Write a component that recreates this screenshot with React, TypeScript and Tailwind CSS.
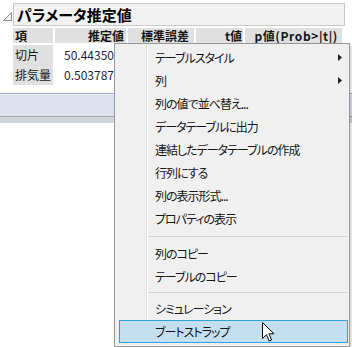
const menuItems = [
  { label: "テーブルスタイル", sub: true },
  { label: "列", sub: true },
  { label: "列の値で並べ替え..." },
  { label: "データテーブルに出力" },
  { label: "連結したデータテーブルの作成" },
  { label: "行列にする" },
  { label: "列の表示形式..." },
  { label: "プロパティの表示" },
];

function MenuItem({ label, sub }: { label: string; sub?: boolean }) {
  return (
    <div className="relative flex h-[23px] items-center pl-[40px]">
      <span>{label}</span>
      {sub && (
        <svg className="absolute right-[7px] top-[8px]" width="4" height="7" viewBox="0 0 4 7">
          <path d="M0 0 L4 3.5 L0 7 Z" fill="#222" />
        </svg>
      )}
    </div>
  );
}

function Separator({ top, bottom }: { top: string; bottom: string }) {
  return (
    <div className={`${top} ${bottom} ml-[34px] mr-[2px]`}>
      <div className="h-px bg-[#d5d5d5]" />
    </div>
  );
}

export default function App() {
  return (
    <div className="relative h-[347px] w-[352px] overflow-hidden bg-white font-['Noto_Sans_CJK_JP',sans-serif] text-[12px] text-[#151515] [font-feature-settings:'palt']">
      {/* title */}
      <div className="flex pr-[7px] pt-[3px]">
        <div className="w-[13px] pl-[3px] pt-[9px]">
          <svg width="9" height="9" viewBox="0 0 9 9">
            <path d="M8.5 0.5 L8.5 8.5 L0.5 8.5 Z" fill="#f4f4f4" stroke="#8a8a8a" />
          </svg>
        </div>
        <div className="h-[23px] flex-1 border border-[#c9c9c9] bg-[#f2f2f2] pl-[3px] text-[15px] font-bold leading-[21px] text-black">
          パラメータ推定値
        </div>
      </div>

      {/* table */}
      <div className="ml-[13px] mt-[2px] grid grid-cols-[40px_71px_66px_47px_97px] gap-x-[2px] leading-[15px]">
        <div className="h-[15px] bg-[#e0e0e0] pl-[2px] font-bold">項</div>
        <div className="h-[15px] bg-[#e0e0e0] pr-[2px] text-right font-bold">推定値</div>
        <div className="h-[15px] bg-[#e0e0e0] pl-[13px] font-bold">標準誤差</div>
        <div className="h-[15px] bg-[#e0e0e0] pr-[1px] text-right font-bold">t値</div>
        <div className="h-[15px] bg-[#e0e0e0] pr-[4px] text-right font-bold tracking-[0.6px]">p値(Prob&gt;|t|)</div>
      </div>
      <div className="ml-[13px] mt-[2px] grid grid-cols-[40px_71px] gap-x-[2px] leading-[20px]">
        <div className="bg-[#e0e0e0] pl-[2px]">
          <div className="h-[20px]">切片</div>
          <div className="h-[20px]">排気量</div>
        </div>
        <div className="pl-[9px] text-[#1a1f3a] [font-feature-settings:normal]">
          <div className="h-[20px]">50.44350</div>
          <div className="h-[20px]">0.503787</div>
        </div>
      </div>

      {/* band below table */}
      <div className="mt-[8px]">
        <div className="h-px bg-[#9ea6d6]" />
        <div className="h-[22px] border-t border-[#eef1f8] bg-[#dde3ee]" />
        <div className="h-px bg-[#a4a4a4]" />
        <div className="h-[6px] bg-[#d0d5dc]" />
      </div>

      {/* context menu */}
      <div className="absolute left-[114px] top-[43px] h-[304px] w-[236px] border border-[#979797] bg-[#f0f0f0] pt-[2px] tracking-[-1px] shadow-[2px_2px_2px_rgba(0,0,0,0.15)]">
        <div className="absolute bottom-0 left-[31px] top-0 w-px bg-[#e2e2e2]" />
        <div className="absolute bottom-0 left-[32px] top-0 w-px bg-white" />
        <div className="relative">
          {menuItems.map((item) => (
            <MenuItem key={item.label} label={item.label} sub={item.sub} />
          ))}
          <Separator top="pt-[6px]" bottom="pb-[5px]" />
          <MenuItem label="列のコピー" />
          <MenuItem label="テーブルのコピー" />
          <Separator top="pt-[4px]" bottom="pb-[4px]" />
          <MenuItem label="シミュレーション" />
          <div className="ml-[4px] mr-[1px] flex h-[23px] items-center border border-[#32a0dc] bg-[#c4dff0] pl-[35px]">
            ブートストラップ
          </div>
        </div>
      </div>

      {/* mouse cursor */}
      <svg className="absolute left-[262px] top-[322px]" width="13" height="21" viewBox="0 0 13 21">
        <path
          d="M0.5 0.5 L0.5 16.5 L4.5 12.7 L7.2 19 L9.6 18 L7 11.8 L12 11.8 Z"
          fill="white"
          stroke="black"
          strokeWidth="1"
          strokeLinejoin="miter"
        />
      </svg>
    </div>
  );
}
